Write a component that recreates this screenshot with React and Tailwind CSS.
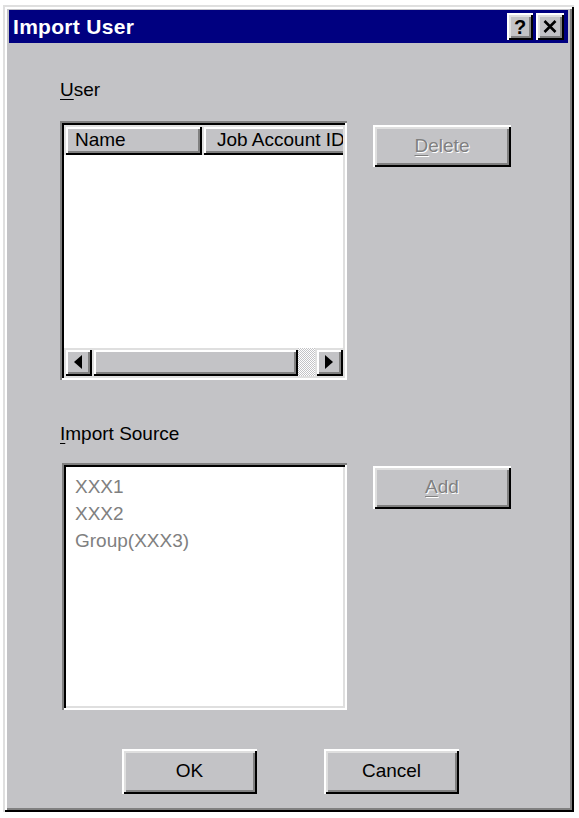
import { useState } from 'react'

const raised =
  'shadow-[inset_2px_2px_0_#dfdfdf,inset_-2px_-2px_0_#000,inset_4px_4px_0_#fff,inset_-4px_-4px_0_#808080]'
const pushBtn =
  'shadow-[inset_2px_2px_0_#fff,inset_-2px_-2px_0_#000,inset_4px_4px_0_#dfdfdf,inset_-4px_-4px_0_#808080]'
const sunken =
  'shadow-[inset_2px_2px_0_#808080,inset_-2px_-2px_0_#fff,inset_4px_4px_0_#000,inset_-4px_-4px_0_#dfdfdf]'
const disabledText = 'text-[#808080] [text-shadow:1px_1px_0_#fff]'

export default function App() {
  const [sources] = useState(['XXX1', 'XXX2', 'Group(XXX3)'])

  return (
    <div className="h-[818px] w-[579px] bg-white pl-[3px] pt-[5px] font-['Liberation_Sans',Arial,sans-serif] text-black">
      <div className={`h-[807px] w-[571px] bg-[#c3c3c6] px-[6px] pt-[5px] ${raised}`}>
        <TitleBar />

        <div className="pl-[51px]">
          <p className="mt-[36px] text-[19px] leading-[22px]">
            <span className="underline decoration-1 underline-offset-[3px]">U</span>ser
          </p>

          <div className="mt-[20px] flex gap-[26px]">
            <UserList />
            <div className="pt-[4px]">
              <PushButton disabled width="w-[138px]" height="h-[42px]">
                <span className="underline decoration-1 underline-offset-[3px]">D</span>elete
              </PushButton>
            </div>
          </div>

          <p className="mt-[43px] text-[19px] leading-[22px]">
            <span className="underline decoration-1 underline-offset-[3px]">I</span>mport Source
          </p>

          <div className="mt-[18px] flex gap-[26px]">
            <div className={`ml-[2px] h-[247px] w-[285px] bg-white p-[4px] ${sunken}`}>
              <ul className="pl-[9px] pt-[6px] text-[19px] leading-[27px] text-[#808080]">
                {sources.map((s) => (
                  <li key={s}>{s}</li>
                ))}
              </ul>
            </div>
            <div className="pt-[3px]">
              <PushButton disabled width="w-[138px]" height="h-[43px]">
                <span className="underline decoration-1 underline-offset-[3px]">A</span>dd
              </PushButton>
            </div>
          </div>

          <div className="mt-[39px] ml-[62px] flex gap-[67px]">
            <PushButton width="w-[135px]" height="h-[45px]">OK</PushButton>
            <PushButton width="w-[135px]" height="h-[45px]">Cancel</PushButton>
          </div>
        </div>
      </div>
    </div>
  )
}

function TitleBar() {
  return (
    <div className="flex h-[33px] items-center justify-between bg-[#000080] pl-[4px] pr-[4px]">
      <span className="text-[21px] font-bold tracking-[0.3px] text-white">Import User</span>
      <div className="flex gap-[3px]">
        <button type="button" className={`flex h-[27px] w-[26px] items-center justify-center bg-[#c3c3c6] text-[20px] font-bold leading-none ${pushBtn}`}>
          ?
        </button>
        <button type="button" className={`flex h-[27px] w-[28px] items-center justify-center bg-[#c3c3c6] ${pushBtn}`}>
          <svg width="14" height="13" viewBox="0 0 14 13">
            <path d="M1.5 1 L12.5 12 M12.5 1 L1.5 12" stroke="#000" strokeWidth="2.6" />
          </svg>
        </button>
      </div>
    </div>
  )
}

function UserList() {
  return (
    <div className={`flex h-[259px] w-[287px] flex-col bg-white p-[4px] ${sunken}`}>
      <div className="flex h-[30px] overflow-hidden">
        <div className={`flex w-[138px] shrink-0 items-center bg-[#c3c3c6] pl-[11px] text-[19px] ${raised}`}>Name</div>
        <div className={`flex w-[150px] shrink-0 items-center overflow-hidden whitespace-nowrap bg-[#c3c3c6] pl-[15px] text-[19px] ${raised}`}>
          Job Account ID
        </div>
      </div>
      <div className="flex-1" />
      <div className="flex h-[28px]">
        <div className={`flex w-[28px] items-center justify-center bg-[#c3c3c6] ${raised}`}>
          <svg width="8" height="14" viewBox="0 0 8 14">
            <polygon points="8,0 0,7 8,14" fill="#000" />
          </svg>
        </div>
        <div className={`w-[206px] bg-[#c3c3c6] ${raised}`} />
        <div className="w-[17px] bg-[repeating-conic-gradient(#ffffff_0%_25%,#c3c3c6_0%_50%)] bg-[length:2px_2px]" />
        <div className={`flex w-[28px] items-center justify-center bg-[#c3c3c6] ${raised}`}>
          <svg width="8" height="14" viewBox="0 0 8 14">
            <polygon points="0,0 8,7 0,14" fill="#000" />
          </svg>
        </div>
      </div>
    </div>
  )
}

function PushButton({ children, disabled, width, height }) {
  return (
    <button
      type="button"
      className={`flex items-center justify-center bg-[#c3c3c6] text-[19px] ${width} ${height} ${pushBtn} ${disabled ? disabledText : 'text-black'}`}
    >
      <span>{children}</span>
    </button>
  )
}
